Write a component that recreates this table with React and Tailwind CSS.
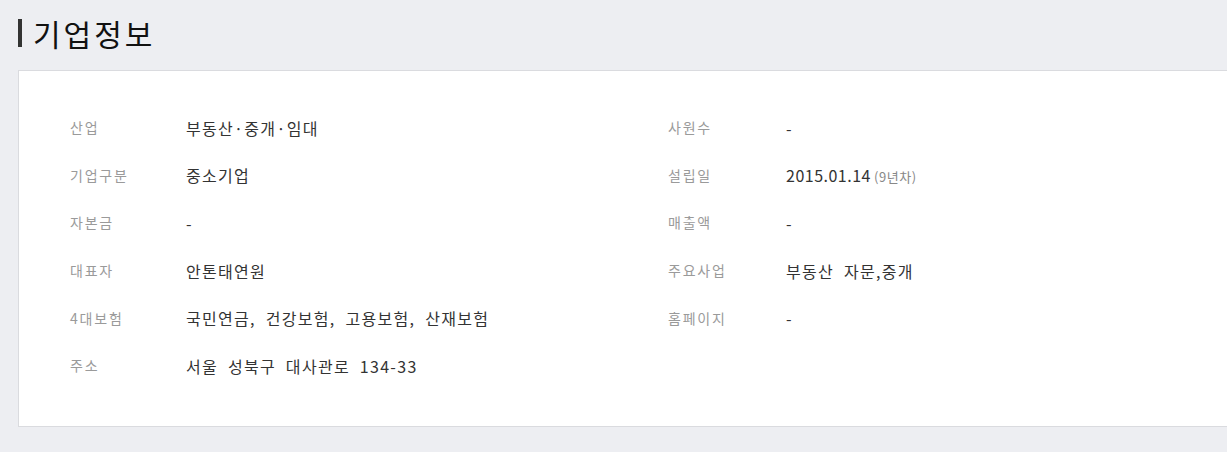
export default function App() {
  const left = [
    { label: '산업', value: '부동산·중개·임대' },
    { label: '기업구분', value: '중소기업' },
    { label: '자본금', value: '-' },
    { label: '대표자', value: '안톤태연원' },
    { label: '4대보험', value: '국민연금, 건강보험, 고용보험, 산재보험' },
    { label: '주소', value: '서울 성북구 대사관로 134-33' },
  ];
  const right = [
    { label: '사원수', value: '-' },
    { label: '설립일', value: '2015.01.14', extra: '(9년차)', num: true },
    { label: '매출액', value: '-' },
    { label: '주요사업', value: '부동산 자문,중개' },
    { label: '홈페이지', value: '-' },
  ];

  const Row = ({ item, labelW }) => (
    <div className="flex items-center h-[47.6px]">
      <span className={`${labelW} shrink-0 text-[14px] text-[#9a9a9a] tracking-[1.8px]`}>{item.label}</span>
      <span
        className={`text-[16px] text-[#333] ${item.num ? 'tracking-[0.5px]' : 'tracking-[1.3px] [word-spacing:5px]'}`}
      >
        {item.value}
        {item.extra && <span className="ml-[3px] text-[13px] text-[#888] tracking-[0.6px]">{item.extra}</span>}
      </span>
    </div>
  );

  return (
    <div
      className="w-[1227px] h-[452px] bg-[#edeef2] overflow-hidden"
      style={{ fontFamily: '"Noto Sans CJK KR", "Noto Sans", sans-serif' }}
    >
      {/* 제목 */}
      <div className="flex items-center h-[70px] pl-[18px] pb-[4px]">
        <div className="w-[4px] h-[28px] bg-[#333] mr-[11px]"></div>
        <h2 className="text-[30px] leading-none text-[#111] tracking-[3px]">기업정보</h2>
      </div>

      {/* 정보 카드 */}
      <div className="ml-[18px] w-[1220px] h-[357px] bg-white border border-[#dadbdf] pt-[33px] pl-[51px] flex">
        <div className="w-[598px] flex flex-col">
          {left.map(item => (
            <Row key={item.label} item={item} labelW="w-[116px]" />
          ))}
        </div>
        <div className="flex-1 flex flex-col">
          {right.map(item => (
            <Row key={item.label} item={item} labelW="w-[118px]" />
          ))}
        </div>
      </div>
    </div>
  );
}
